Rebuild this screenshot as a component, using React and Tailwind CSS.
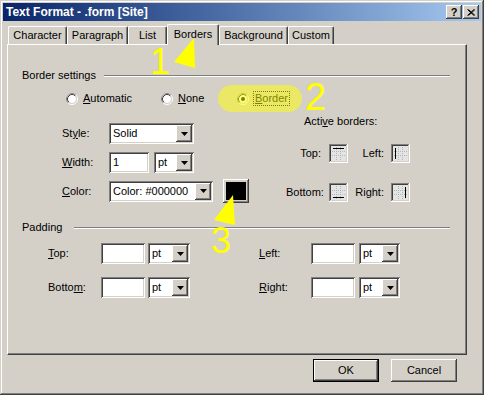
import React from "react";

// classic win2k bevels
const raised = "shadow-[inset_-1px_-1px_0_#404040,inset_1px_1px_0_#fff,inset_-2px_-2px_0_#808080]";
const sunken = "shadow-[inset_1px_1px_0_#808080,inset_-1px_-1px_0_#fff,inset_2px_2px_0_#404040,inset_-2px_-2px_0_#d4d0c8]";

const tabs = [
  { label: "Character", w: "w-[59px]" },
  { label: "Paragraph", w: "w-[61px]" },
  { label: "List", w: "w-[39px]" },
  { label: "Borders", w: "w-[52px]", active: true },
  { label: "Background", w: "w-[69px]" },
  { label: "Custom", w: "w-[46px]" },
];

const DropBtn = () => (
  <div className={`w-[16px] h-[17px] shrink-0 bg-[#d4d0c8] flex items-center justify-center ${raised}`}>
    <svg width="7" height="4" viewBox="0 0 7 4">
      <path d="M0 0h7L3.5 4z" fill="#000" />
    </svg>
  </div>
);

const Combo = ({ className, value }) => (
  <div className={`h-[21px] bg-white flex items-center pl-[4px] pr-[2px] ${sunken} ${className}`}>
    <span className="flex-1 truncate leading-[13px]">{value}</span>
    <DropBtn />
  </div>
);

const Input = ({ className, value }) => (
  <div className={`h-[21px] bg-white flex items-center pl-[4px] ${sunken} ${className}`}>
    <span className="leading-[13px]">{value}</span>
  </div>
);

const Radio = ({ checked }) => (
  <svg width="12" height="12" viewBox="0 0 12 12" className="shrink-0">
    <circle cx="6" cy="6" r="5.5" fill="none" stroke="#fff" />
    <path d="M2.11 9.89 A5.5 5.5 0 0 1 9.89 2.11" fill="none" stroke="#808080" />
    <circle cx="6" cy="6" r="4.5" fill="#fff" stroke="#d4d0c8" />
    <path d="M2.82 9.18 A4.5 4.5 0 0 1 9.18 2.82" fill="none" stroke="#404040" />
    {checked && <circle cx="6" cy="6" r="2" fill="#000" />}
  </svg>
);

// little preview box for active borders
const SideIcon = ({ side }) => {
  const line = {
    top: "M4 4.5h11",
    left: "M4.5 4v11",
    bottom: "M4 14.5h11",
    right: "M14.5 4v11",
  }[side];
  return (
    <svg width="19" height="19" viewBox="0 0 19 19" className="shrink-0">
      <rect x="0" y="0" width="19" height="19" fill="#fff" />
      <rect x="0" y="0" width="18" height="18" fill="#808080" />
      <rect x="1" y="1" width="17" height="17" fill="#d4d0c8" />
      <rect x="1" y="1" width="16" height="16" fill="#404040" />
      <rect x="2" y="2" width="15" height="15" fill="#e4e4e4" />
      <path
        d="M7.5 3v13M11.5 3v13M3 7.5h13M3 11.5h13"
        stroke="#b4b4b4"
        strokeDasharray="1 1"
      />
      <path d={line} stroke="#000" />
    </svg>
  );
};

const GroupHead = ({ label, w }) => (
  <div className="flex items-center h-[13px]">
    <span className={`${w} leading-[13px]`}>{label}</span>
    <div className="flex-1 mr-[16px] h-[2px] border-t border-t-[#808080] border-b border-b-white" />
  </div>
);

export default function App() {
  return (
    <div className="w-[484px] h-[395px] overflow-hidden bg-[#d4d0c8] font-['Liberation_Sans',Arial,sans-serif] text-[11px] text-black">
      <div className="relative w-[484px] h-[395px] p-[3px] flex flex-col shadow-[inset_-1px_-1px_0_#404040,inset_1px_1px_0_#d4d0c8,inset_-2px_-2px_0_#808080,inset_2px_2px_0_#fff]">
        {/* title bar */}
        <div className="h-[18px] flex items-center bg-linear-to-r from-[#0a246a] to-[#a6caf0] pl-[3px] pr-[2px]">
          <span className="flex-1 text-white font-bold text-[12px] leading-[14px]">
            Text Format - .form [Site]
          </span>
          <div className={`w-[16px] h-[14px] bg-[#d4d0c8] flex items-center justify-center font-bold text-[11px] leading-none ${raised}`}>
            ?
          </div>
          <div className={`ml-px w-[16px] h-[14px] bg-[#d4d0c8] flex items-center justify-center ${raised}`}>
            <svg width="8" height="7" viewBox="0 0 8 7">
              <path d="M0.5 0.5l6.5 6M7 0.5l-6.5 6M1.5 0.5l6.5 6M8 0.5l-6.5 6" stroke="#000" />
            </svg>
          </div>
        </div>

        {/* tabs */}
        <div className="mt-[3px] h-[20px] flex items-end pl-[5px]">
          {tabs.map((t) => (
            <div
              key={t.label}
              className={`${t.w} flex items-center justify-center border-t border-l border-white border-r border-r-[#404040] rounded-t-[2px] shadow-[inset_-1px_0_0_#808080] ${
                t.active ? "relative z-10 h-[21px] -mb-px bg-[#d4d0c8] pb-[2px]" : "h-[18px]"
              }`}
            >
              <span className="leading-[13px]">{t.label}</span>
            </div>
          ))}
        </div>

        {/* panel */}
        <div className="ml-[4px] w-[460px] h-[311px] border-t border-l border-white border-r border-b border-r-[#404040] border-b-[#404040] shadow-[inset_-1px_-1px_0_#808080]">
          <div className="flex flex-col pl-[14px] pt-[24px]">
            <GroupHead label="Border settings" w="w-[82px]" />

            {/* radios */}
            <div className="mt-[10px] ml-[44px] h-[13px] flex items-center">
              <div className="w-[95px] flex items-center gap-[5px]">
                <Radio />
                <span className="leading-[13px]"><u>A</u>utomatic</span>
              </div>
              <div className="w-[76px] flex items-center gap-[5px]">
                <Radio />
                <span className="leading-[13px]"><u>N</u>one</span>
              </div>
              <div className="flex items-center gap-[4px]">
                <Radio checked />
                <span className="leading-[13px] border border-dotted border-black px-px"><u>B</u>order</span>
              </div>
            </div>

            <div className="mt-[10px] flex">
              {/* style / width / color */}
              <div className="ml-[40px] w-[224px] flex flex-col pt-[8px]">
                <div className="h-[21px] flex items-center">
                  <span className="w-[47px] leading-[13px]">St<u>y</u>le:</span>
                  <Combo className="w-[85px]" value="Solid" />
                </div>
                <div className="mt-[8px] h-[21px] flex items-center">
                  <span className="w-[47px] leading-[13px]"><u>W</u>idth:</span>
                  <Input className="w-[40px]" value="1" />
                  <Combo className="ml-[5px] w-[40px]" value="pt" />
                </div>
                <div className="mt-[6px] h-[24px] flex items-center">
                  <span className="w-[47px] leading-[13px]"><u>C</u>olor:</span>
                  <Combo className="w-[104px]" value="Color: #000000" />
                  <div className={`ml-[10px] w-[26px] h-[24px] bg-[#d4d0c8] p-[3px] ${raised}`}>
                    <div className="w-full h-full bg-black" />
                  </div>
                </div>
              </div>

              {/* active borders */}
              <div className="flex flex-col">
                <span className="ml-[18px] h-[13px] leading-[13px]">Acti<u>v</u>e borders:</span>
                <div className="mt-[16px] h-[19px] flex items-center">
                  <span className="w-[35px] text-right leading-[13px]">Top:</span>
                  <div className="ml-[8px]"><SideIcon side="top" /></div>
                  <span className="w-[36px] text-right leading-[13px]">Left:</span>
                  <div className="ml-[7px]"><SideIcon side="left" /></div>
                </div>
                <div className="mt-[20px] h-[19px] flex items-center">
                  <span className="w-[35px] text-right leading-[13px]">Bottom:</span>
                  <div className="ml-[8px]"><SideIcon side="bottom" /></div>
                  <span className="w-[36px] text-right leading-[13px]">Right:</span>
                  <div className="ml-[7px]"><SideIcon side="right" /></div>
                </div>
              </div>
            </div>

            <div className="mt-[18px]">
              <GroupHead label="Padding" w="w-[52px]" />
            </div>

            <div className="mt-[9px] ml-[26px] h-[21px] flex items-center">
              <span className="w-[53px] leading-[13px]"><u>T</u>op:</span>
              <Input className="w-[44px]" value="" />
              <Combo className="ml-[3px] w-[42px]" value="pt" />
              <span className="ml-[69px] w-[52px] leading-[13px]"><u>L</u>eft:</span>
              <Input className="w-[44px]" value="" />
              <Combo className="ml-[4px] w-[41px]" value="pt" />
            </div>
            <div className="mt-[13px] ml-[26px] h-[21px] flex items-center">
              <span className="w-[53px] leading-[13px]">Botto<u>m</u>:</span>
              <Input className="w-[44px]" value="" />
              <Combo className="ml-[3px] w-[42px]" value="pt" />
              <span className="ml-[69px] w-[52px] leading-[13px]"><u>R</u>ight:</span>
              <Input className="w-[44px]" value="" />
              <Combo className="ml-[4px] w-[41px]" value="pt" />
            </div>
          </div>
        </div>

        {/* buttons */}
        <div className="mt-[4px] flex justify-end gap-[12px] pr-[24px]">
          <div className="w-[66px] h-[23px] border border-black">
            <div className={`w-full h-full flex items-center justify-center ${raised}`}>
              <span className="leading-[13px]">OK</span>
            </div>
          </div>
          <div className={`w-[66px] h-[23px] flex items-center justify-center ${raised}`}>
            <span className="leading-[13px]">Cancel</span>
          </div>
        </div>

        {/* yellow callouts drawn over the dialog */}
        <div className="absolute inset-0 pointer-events-none z-20">
          <svg width="484" height="395" className="absolute left-0 top-0">
            <rect x="218" y="85" width="84" height="27" rx="13.5" fill="#ffff00" opacity="0.5" />
            <polygon points="194,38 174,62 195,68" fill="#ffff00" />
            <polygon points="233,195 214,220 235,225" fill="#ffff00" />
          </svg>
          <span className="absolute left-[150px] top-[44px] text-[36px] leading-none text-[#ffff00]">1</span>
          <span className="absolute left-[305px] top-[78px] text-[38px] leading-none text-[#ffff00]">2</span>
          <span className="absolute left-[211px] top-[223px] text-[36px] leading-none text-[#ffff00]">3</span>
        </div>
      </div>
    </div>
  );
}
